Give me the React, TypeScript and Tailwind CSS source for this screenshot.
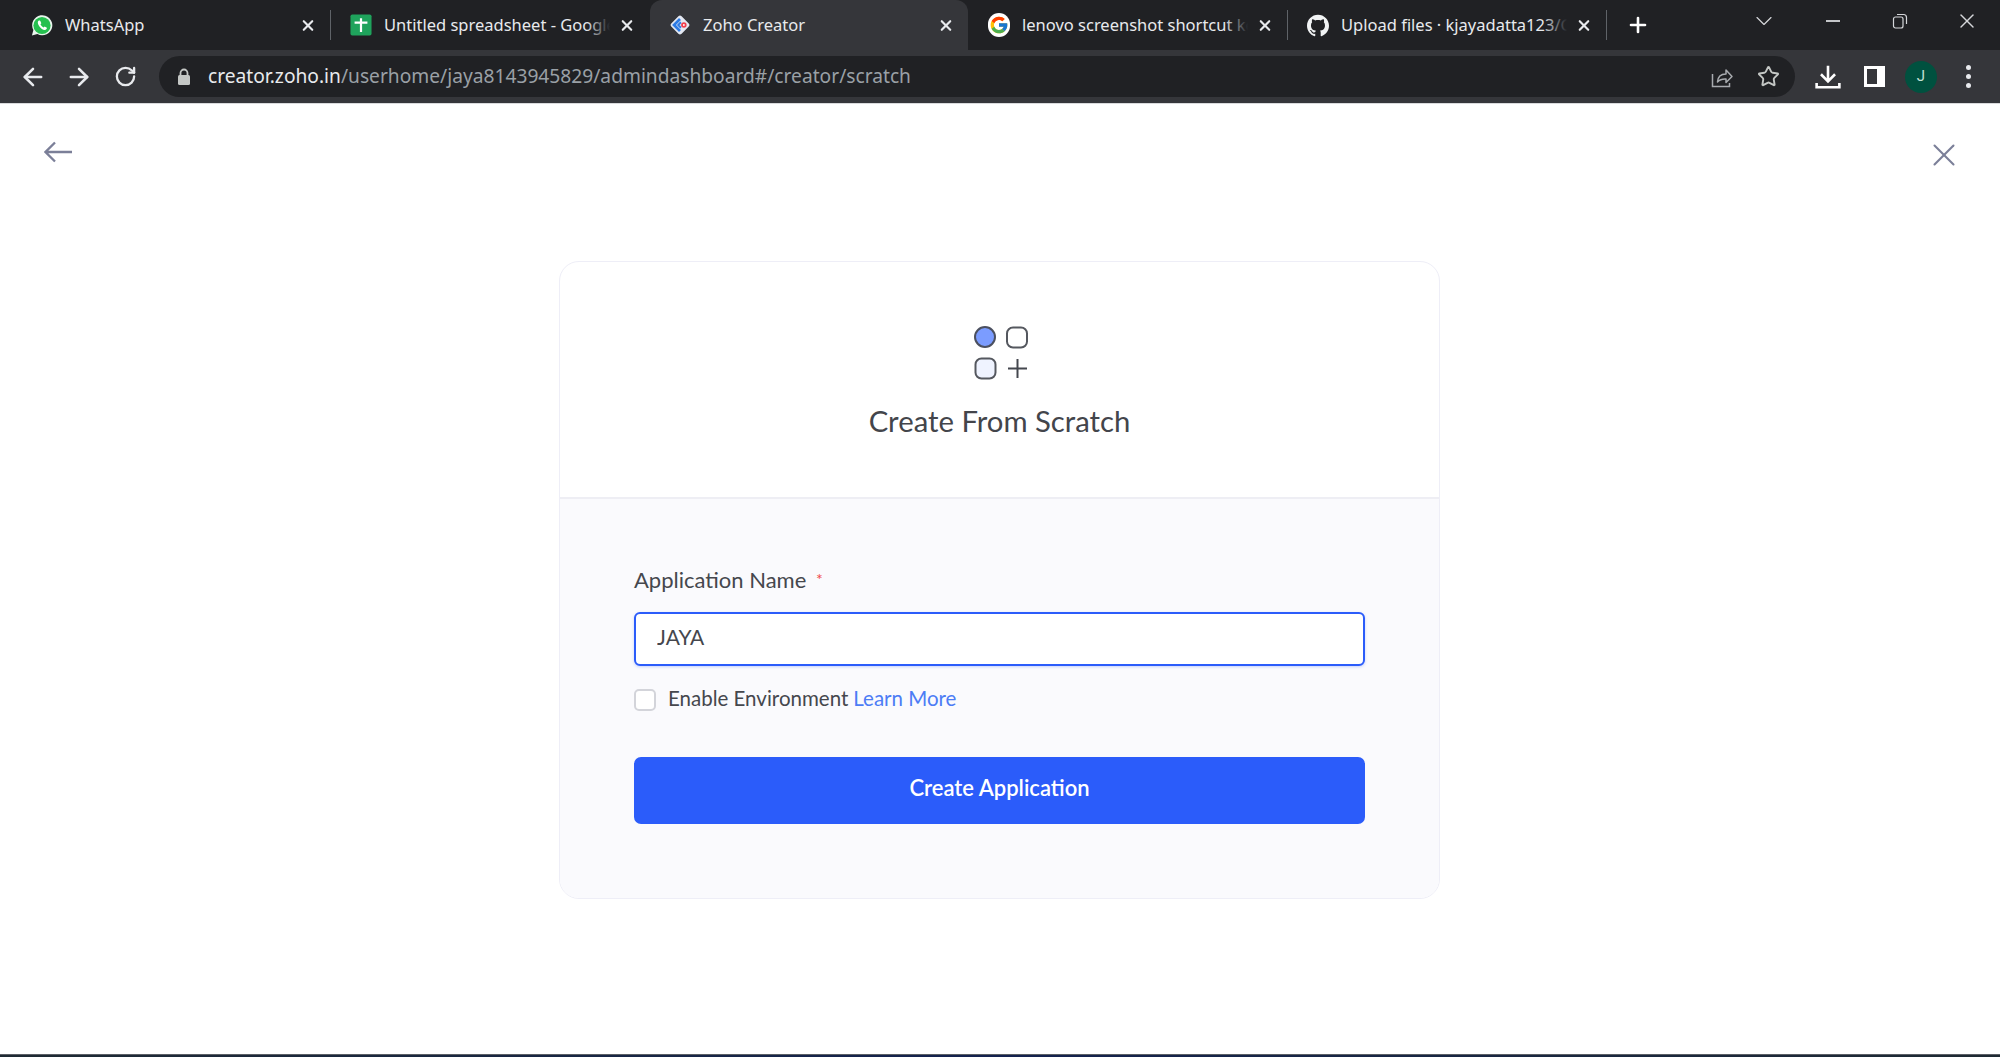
import { ArrowLeft, ArrowRight, ChevronDown, Plus, RotateCw, Star, X } from 'lucide-react';
import { FcGoogle } from 'react-icons/fc';
import { SiGithub } from 'react-icons/si';

// ---- favicons ----
function WhatsAppIcon() {
  return (
    <svg viewBox="0 0 24 24" className="h-[25px] w-[25px]">
      <path d="M1 23l1.600-6A11 11 0 1 1 7 21.400z" fill="#e8f5ec" />
      <circle cx="12" cy="12" r="9.400" fill="#25c04f" />
      <path
        d="M8.300 6.800c-1.200 1-1.400 3 .7 6s5 4.600 6.900 3.800c1.200-.5 1.600-1.500 1.400-2.200l-2.400-1.300-1.100 1.100c-1.100-.3-2.900-2-3.500-3.500l1-1.100-1.100-2.600c-.7-.4-1.400-.4-1.900-.2z"
        fill="#fff"
      />
    </svg>
  );
}

function SheetsIcon() {
  return (
    <svg viewBox="0 0 24 24" className="h-[24px] w-[24px]">
      <rect x="0.500" y="0.500" width="23" height="23" rx="2" fill="#1fa35c" />
      <path d="M5 9.500h14M12 4.500v15" stroke="#fff" strokeWidth="2.400" />
    </svg>
  );
}

function ZohoIcon() {
  return (
    <svg viewBox="0 0 24 24" className="h-[26px] w-[26px]">
      <rect x="4" y="4" width="16" height="16" rx="2.500" transform="rotate(45 12 12)" fill="#e3e8f2" />
      <path d="M12 5.500L5.500 12l6.500 6.500" fill="none" stroke="#2c7be5" strokeWidth="3" />
      <path d="M13 9l-3 3 3 3" fill="none" stroke="#2c7be5" strokeWidth="2" />
      <circle cx="16.200" cy="12" r="3" fill="#ef3d4c" />
      <circle cx="16.200" cy="12" r="1" fill="#fff" />
    </svg>
  );
}

function GoogleIcon() {
  return (
    <span className="flex h-[24px] w-[24px] items-center justify-center rounded-full bg-white">
      <FcGoogle size={20} />
    </span>
  );
}

const tabs = [
  { title: 'WhatsApp', icon: <WhatsAppIcon />, divider: true },
  { title: 'Untitled spreadsheet - Google Sheets', icon: <SheetsIcon />, divider: false },
  { title: 'Zoho Creator', icon: <ZohoIcon />, active: true, divider: false },
  { title: 'lenovo screenshot shortcut key - Google Search', icon: <GoogleIcon />, divider: true },
  { title: 'Upload files · kjayadatta123/Google', icon: <SiGithub size={23} className="text-[#f1f3f4]" />, divider: true },
];

function TabStrip() {
  return (
    <div className="flex h-[50px] shrink-0 bg-[#202124] pl-[12px] font-['Noto_Sans',sans-serif] text-[16.500px] text-[#e8eaed]">
      {tabs.map((tab) => (
        <div key={tab.title} className="flex items-center">
          <div
            className={
              tab.active
                ? 'flex h-full w-[318px] items-center rounded-t-[12px] bg-[#35363a] pl-[19px] pr-[13px]'
                : 'flex h-full w-[318px] items-center pl-[19px] pr-[13px]'
            }
          >
            <span className="flex w-[22px] shrink-0 justify-center">{tab.icon}</span>
            <span className="relative ml-[12px] min-w-0 flex-1 overflow-hidden whitespace-nowrap">
              {tab.title}
              {!tab.active && tab.title !== 'WhatsApp' && (
                <span className="absolute inset-y-0 right-0 w-[24px] bg-gradient-to-r from-transparent to-[#202124]" />
              )}
            </span>
            <X size={17} strokeWidth={3} className="ml-2 w-[18px] shrink-0" />
          </div>
          <span className={tab.divider ? 'h-[30px] w-px bg-[#5f6368]' : 'h-[30px] w-px'} />
        </div>
      ))}
      <Plus size={24} strokeWidth={2.600} className="ml-[19px] mt-[13px] shrink-0 text-white" />

      {/* window controls */}
      <div className="ml-auto flex h-[42px] text-[#d5d7da]">
        <div className="mr-[2px] flex w-[67px] items-center justify-center">
          <ChevronDown size={28} strokeWidth={1} />
        </div>
        <div className="flex w-[67px] items-center justify-center">
          <span className="h-[2px] w-[14px] bg-[#c4c6c9]" />
        </div>
        <div className="flex w-[67px] items-center justify-center">
          <svg viewBox="0 0 16 16" className="h-[16px] w-[16px]" fill="none" stroke="currentColor" strokeWidth="1.200">
            <rect x="1.500" y="4" width="9.500" height="11" rx="2" />
            <path d="M5 1.500h6.500a3 3 0 0 1 3 3V11" />
          </svg>
        </div>
        <div className="flex w-[67px] items-center justify-center">
          <X size={24} strokeWidth={1.400} />
        </div>
      </div>
    </div>
  );
}

function ToolbarButton({ children }: { children: React.ReactNode }) {
  return <div className="flex w-[46px] shrink-0 items-center justify-center">{children}</div>;
}

function Toolbar() {
  return (
    <div className="flex h-[53px] shrink-0 items-center bg-[#35363a] pl-[10px] text-[#e8eaed]">
      <ToolbarButton>
        <ArrowLeft size={28} strokeWidth={2.200} />
      </ToolbarButton>
      <ToolbarButton>
        <ArrowRight size={28} strokeWidth={2.200} />
      </ToolbarButton>
      <ToolbarButton>
        <RotateCw size={23} strokeWidth={2.400} />
      </ToolbarButton>

      {/* omnibox */}
      <div className="ml-[11px] flex h-[41px] w-[1636px] shrink-0 items-center rounded-full bg-[#202124] pl-[18px] pr-[4px]">
        <svg viewBox="0 0 14 18" className="h-[18px] w-[14px]">
          <path d="M3.500 8V5a3.500 3.500 0 0 1 7 0v3" fill="none" stroke="#c4c7c5" strokeWidth="1.800" />
          <rect x="1" y="7" width="12" height="10" rx="1.500" fill="#c4c7c5" />
        </svg>
        <span className="ml-[17px] flex-1 font-['Noto_Sans',sans-serif] text-[19.200px] text-[#e8eaed]">
          creator.zoho.in<span className="text-[#9aa0a6]">/userhome/jaya8143945829/admindashboard#/creator/scratch</span>
        </span>
        <ToolbarButton>
          <svg viewBox="0 0 24 24" className="h-[24px] w-[24px]" fill="none" stroke="#a8abaf" strokeWidth="1.500">
            <path d="M2.500 9v12.500h17V18" />
            <path d="M7.500 17c.3-5 3.500-8 8.500-8V5l6 6.500-6 6V14c-3.500-.2-6.500.8-8.500 3z" strokeLinejoin="round" />
          </svg>
        </ToolbarButton>
        <ToolbarButton>
          <Star size={23} strokeWidth={2} className="text-[#c4c7c5]" />
        </ToolbarButton>
      </div>

      {/* extensions and profile */}
      <div className="ml-[10px] flex items-center">
        <ToolbarButton>
          <svg viewBox="0 0 24 24" className="h-[26px] w-[26px]" fill="none" stroke="#fff" strokeWidth="2.400">
            <path d="M12 1.500v14M5.500 9.500l6.500 6.500 6.500-6.500" />
            <path d="M1.500 17.500v4h21v-4" />
          </svg>
        </ToolbarButton>
        <ToolbarButton>
          <span className="flex h-[21px] w-[21px] border-[3px] border-white bg-white">
            <span className="h-full w-[10px] bg-[#35363a]" />
          </span>
        </ToolbarButton>
        <ToolbarButton>
          <span className="ml-[2px] flex h-[32px] w-[32px] items-center justify-center rounded-full bg-[#00513f] font-['Roboto',sans-serif] text-[15px] text-[#c3e0d4]">
            J
          </span>
        </ToolbarButton>
        <ToolbarButton>
          <span className="ml-[4px] flex flex-col gap-[4px]">
            <span className="h-[5px] w-[5px] rounded-full bg-[#e8eaed]" />
            <span className="h-[5px] w-[5px] rounded-full bg-[#e8eaed]" />
            <span className="h-[5px] w-[5px] rounded-full bg-[#e8eaed]" />
          </span>
        </ToolbarButton>
      </div>
    </div>
  );
}

function ScratchIcon() {
  return (
    <svg viewBox="0 0 54 54" className="ml-[2px] h-[54px] w-[54px]">
      <circle cx="11" cy="11" r="10" fill="#7b9cff" stroke="#4b5060" strokeWidth="2" />
      <rect x="33" y="1.500" width="20" height="20" rx="6" fill="#fff" stroke="#55585f" strokeWidth="2" />
      <rect x="1.500" y="32.500" width="20" height="20" rx="6" fill="#eff3ff" stroke="#55585f" strokeWidth="2" />
      <path d="M34 42.500h19M43.500 33v19" stroke="#44474e" strokeWidth="2" />
    </svg>
  );
}

function CreateCard() {
  return (
    <div className="ml-[559px] mt-[87px] flex h-[638px] w-[881px] flex-col overflow-hidden rounded-[20px] border border-[#eeeef7] bg-white font-['Lato',sans-serif]">
      <div className="flex h-[237px] shrink-0 flex-col items-center border-b-2 border-[#eeeef4] pt-[64px]">
        <ScratchIcon />
        <h1 className="mt-[25px] text-[29.300px] leading-[32px] text-[#43454b]">Create From Scratch</h1>
      </div>
      <div className="flex-1 bg-[#fafafd] px-[74px] pt-[67px]">
        <label className="block text-[22px] leading-[28px] text-[#45474d]">
          Application Name <span className="relative -top-[3px] ml-[4px] text-[16px] text-[#f04848]">*</span>
        </label>
        <input
          readOnly
          value="JAYA"
          className="mt-[16px] block h-[54px] w-full rounded-[6px] border-2 border-[#2b5cfa] bg-white pb-[6px] pl-[21px] text-[21px] text-[#45474d] shadow-[0_1px_3px_rgba(43,92,250,0.25)] outline-none"
        />
        <div className="mt-[23px] flex h-[22px] items-center text-[20.500px] text-[#45474d]">
          <span className="h-[22px] w-[22px] rounded-[5px] border-2 border-[#d3d4da] bg-white" />
          <span className="ml-[12px] pb-[3px]">Enable Environment</span>
          <a className="ml-[5px] pb-[3px] text-[#4c7cf5]">Learn More</a>
        </div>
        <button className="mt-[46px] block h-[67px] w-full rounded-[7px] bg-[#2b5cfa] pb-[6px] text-[22px] font-semibold text-white">
          Create Application
        </button>
      </div>
    </div>
  );
}

export default function App() {
  return (
    <div className="flex h-[1057px] w-[2000px] flex-col overflow-hidden bg-white">
      <TabStrip />
      <Toolbar />
      <main className="flex-1 border-t border-[#d9dadc] bg-white">
        <div className="flex items-start justify-between pl-[44px] pr-[37px] pt-[37px]">
          <svg viewBox="0 0 28 22" className="h-[22px] w-[28px]" fill="none" stroke="#7b7f98" strokeWidth="2.300">
            <path d="M28 11H2M11 1.500L1.500 11l9.500 9.500" />
          </svg>
          <X size={38} strokeWidth={1.300} className="-mt-[5px] text-[#7b7f98]" />
        </div>
        <CreateCard />
      </main>
      <div className="h-[3px] shrink-0 border-t border-[#5c6066] bg-gradient-to-r from-[#1f2a33] via-[#14224f] to-[#1f2a33]" />
    </div>
  );
}
